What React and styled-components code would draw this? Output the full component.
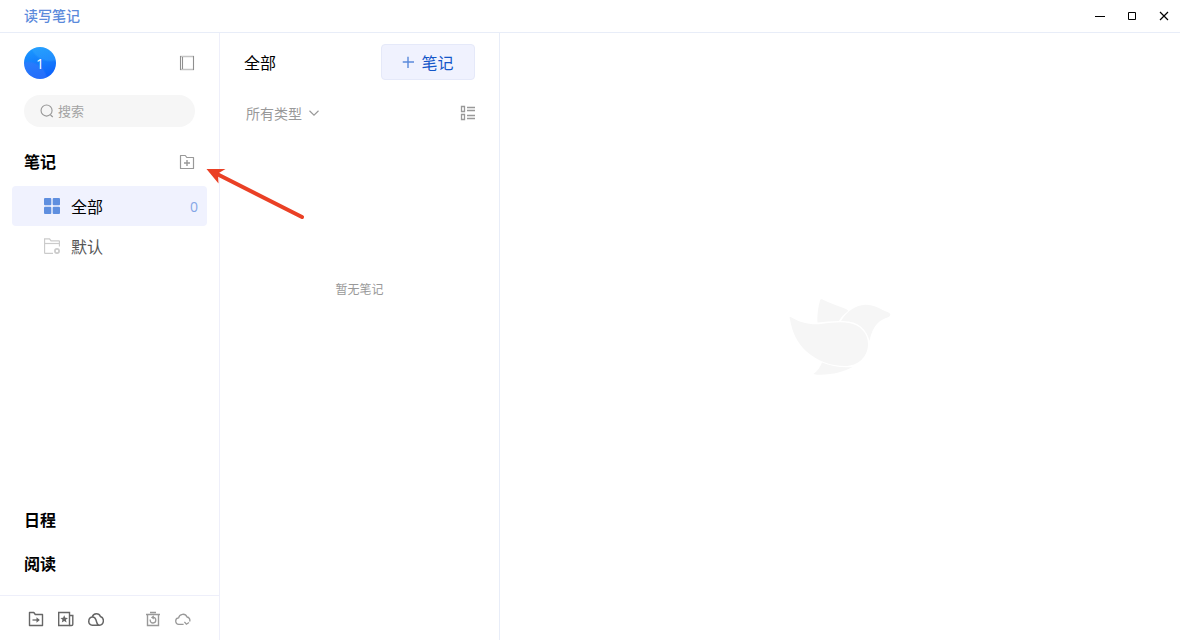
import { useState } from "react";
import styled, { createGlobalStyle } from "styled-components";

const GlobalStyle = createGlobalStyle`
  * {
    box-sizing: border-box;
  }

  body {
    margin: 0;
    background: #fff;
    font-family: "Open Sans", "Noto Sans CJK SC", sans-serif;
    color: #000;
  }

  button, input {
    font-family: inherit;
  }

  svg {
    display: block;
    flex: none;
  }
`;

const Window = styled.div`
  display: flex;
  flex-direction: column;
  height: 100vh;
  overflow: hidden;
`;

const TitleBar = styled.header`
  display: flex;
  justify-content: space-between;
  height: 33px;
  flex: none;
  padding-left: 24px;
  border-bottom: 1px solid #e8edf8;
`;

const AppName = styled.span`
  font-size: 14px;
  line-height: 32px;
  font-weight: 500;
  color: #5b8adb;
`;

const WindowControls = styled.div`
  display: flex;
`;

const WindowButton = styled.button`
  display: flex;
  align-items: center;
  justify-content: center;
  width: 32px;
  padding: 0;
  border: none;
  background: none;
  color: #000;
  cursor: pointer;

  &:hover {
    background: #f0f2fe;
  }
`;

const Body = styled.div`
  display: flex;
  flex: 1;
  min-height: 0;
`;

const Sidebar = styled.aside`
  position: relative;
  display: flex;
  flex-direction: column;
  width: 220px;
  flex: none;
  border-right: 1px solid #eeeffa;
`;

const UserRow = styled.div`
  display: flex;
  align-items: center;
  justify-content: space-between;
  height: 32px;
  margin: 14px 24px 16px;
`;

const Avatar = styled.button`
  width: 32px;
  height: 32px;
  padding: 2px 0 0;
  border: none;
  border-radius: 50%;
  font-size: 14px;
  line-height: 30px;
  color: #fff;
  background:
    radial-gradient(circle at 4px 34px, rgba(60, 120, 250, 0.5) 18px, transparent 20px),
    radial-gradient(circle at 26px -6px, rgba(60, 175, 255, 0.35) 19px, transparent 21px),
    linear-gradient(165deg, #1a9eff, #0c58fa);
`;

const IconButton = styled.button`
  display: flex;
  padding: 0;
  border: none;
  background: none;
  color: ${({ $color }) => $color || "#999"};
  cursor: pointer;
`;

const SearchBox = styled.label`
  display: flex;
  align-items: center;
  gap: 4px;
  height: 32px;
  margin: 0 24px;
  padding: 0 16px;
  border-radius: 16px;
  background: #f6f6f6;
  color: #999;
`;

const SearchInput = styled.input`
  flex: 1;
  min-width: 0;
  height: 32px;
  padding: 0;
  border: none;
  outline: none;
  background: none;
  font-size: 13px;
  color: #333;

  &::placeholder {
    color: #a3a3a3;
  }
`;

const SectionHeader = styled.div`
  display: flex;
  align-items: center;
  justify-content: space-between;
  height: 44px;
  margin: ${({ $first }) => ($first ? "13px" : "0")} 24px 0;
`;

const SectionTitle = styled.h2`
  margin: 0;
  font-size: 16px;
  line-height: 24px;
  font-weight: 700;
`;

const Folders = styled.nav`
  display: flex;
  flex-direction: column;
  flex: 1;
  margin: 2px 12px 0;
`;

const Folder = styled.button`
  display: flex;
  align-items: center;
  gap: 11px;
  height: 40px;
  padding: 0 9px 0 32px;
  border: none;
  border-radius: 4px;
  background: ${({ $active }) => ($active ? "#f0f2fe" : "none")};
  color: ${({ $active }) => ($active ? "#000" : "#555")};
  font-size: 16px;
  line-height: 24px;
  text-align: left;
  cursor: pointer;
`;

const FolderName = styled.span`
  padding-top: 2px;
`;

const Count = styled.span`
  margin-left: auto;
  padding-top: 2px;
  font-size: 14px;
  color: #85a6e6;
`;

const SidebarFooter = styled.footer`
  display: flex;
  align-items: center;
  gap: 14px;
  height: 45px;
  margin-top: 9px;
  padding: 2px 28px 0;
  border-top: 1px solid #eeeffa;
`;

const FooterEnd = styled.div`
  display: flex;
  align-items: center;
  gap: 14px;
  margin-left: auto;
`;

const NoteList = styled.section`
  display: flex;
  flex-direction: column;
  width: 280px;
  flex: none;
  border-right: 1px solid #e8edf8;
`;

const ListHeader = styled.div`
  display: flex;
  align-items: center;
  justify-content: space-between;
  margin: 11px 24px 0;
`;

const ListTitle = styled.h1`
  margin: 0;
  padding-top: 2px;
  font-size: 16px;
  line-height: 34px;
  font-weight: 400;
`;

const NewNoteButton = styled.button`
  display: flex;
  align-items: center;
  justify-content: center;
  gap: 7px;
  width: 94px;
  height: 36px;
  padding: 0;
  border: 1px solid #e5e9f9;
  border-radius: 4px;
  background: #f0f2fe;
  color: #1456c8;
  font-size: 16px;
  cursor: pointer;
`;

const FilterRow = styled.div`
  display: flex;
  align-items: center;
  justify-content: space-between;
  margin: 21px 23px 0 26px;
`;

const TypeFilter = styled.label`
  display: grid;
  align-items: center;
  color: #999;

  & > * {
    grid-area: 1 / 1;
  }

  & > svg {
    justify-self: end;
    pointer-events: none;
  }
`;

const TypeSelect = styled.select`
  appearance: none;
  width: 74px;
  height: 24px;
  padding: 0;
  border: none;
  outline: none;
  background: none;
  font-family: inherit;
  font-size: 14px;
  color: #999;
`;

const EmptyText = styled.p`
  margin: 155px 0 0;
  font-size: 12px;
  line-height: 20px;
  text-align: center;
  color: #999;
`;

const Editor = styled.main`
  display: flex;
  align-items: center;
  justify-content: center;
  flex: 1;
  min-width: 0;
  padding-top: 2px;
`;

// the pointer lies over the sidebar and the list
const Pointer = styled.svg`
  position: absolute;
  left: 204px;
  top: 131px;
  z-index: 1;
  pointer-events: none;
`;

const Icon = ({ size = 16, children, ...rest }) => (
  <svg width={size} height={size} viewBox="0 0 16 16" fill="none" stroke="currentColor" aria-hidden="true" {...rest}>
    {children}
  </svg>
);

const PanelIcon = () => (
  <Icon>
    <path d="M1 1.5h14M1 14.5h14" stroke="#c4c4c4" strokeWidth="1.5" />
    <path d="M1.5 1v14M3.5 2v12M14.5 1v14" stroke="#8f8f8f" strokeWidth="1.1" />
  </Icon>
);

const SearchIcon = () => (
  <Icon size={14}>
    <circle cx="7.5" cy="7.5" r="6.3" strokeWidth="1.3" />
    <path d="M12 12.5l2.6 2.3" strokeWidth="1.4" />
  </Icon>
);

const AddFolderIcon = () => (
  <Icon>
    <path d="M1.5 14.5v-13h4.8l1.5 2h6.7v11z" strokeWidth="1.2" strokeLinejoin="round" />
    <path d="M8 6v6M5 9h6" strokeWidth="1.4" />
  </Icon>
);

const GridIcon = () => (
  <Icon stroke="none" fill="#5f8fdf">
    <rect width="7.3" height="7.3" rx="1" />
    <rect x="8.7" width="7.3" height="7.3" rx="1" />
    <rect y="8.7" width="7.3" height="7.3" rx="1" />
    <rect x="8.7" y="8.7" width="7.3" height="7.3" rx="1" />
  </Icon>
);

const DefaultFolderIcon = () => (
  <Icon stroke="#cbcbcb">
    <path d="M9 15.3H1.3a.8.8 0 0 1-.8-.8V.8h5l1.6 2h7.6a.8.8 0 0 1 .8.8v5" strokeWidth="1.3" />
    <path d="M.5 5.5h15" strokeWidth="1.2" />
    <circle cx="13" cy="13" r="2.1" strokeWidth="1.7" />
  </Icon>
);

const MoveFolderIcon = () => (
  <Icon>
    <path d="M1.5 14.5v-13h4.3l1.5 2h7.2v11z" strokeWidth="1.4" strokeLinejoin="round" />
    <path d="M4.5 9h6" strokeWidth="1.3" />
    <path d="M8.5 6.2L11.8 9l-3.3 2.8z" fill="currentColor" stroke="none" />
  </Icon>
);

const FavoriteIcon = () => (
  <Icon>
    <path d="M.7 1.5h10.8v13H.7z" strokeWidth="1.4" />
    <path d="M11.5 4.5h3.3v8.8q0 1.2-1.2 1.2h-2.1" strokeWidth="1.4" />
    <path d="M6.2 4.3l1.1 2.5 2.7.2-2.1 1.8.7 2.7-2.4-1.4-2.4 1.4.7-2.7-2.1-1.8 2.7-.2z" fill="currentColor" stroke="none" />
  </Icon>
);

const CloudIcon = () => (
  <Icon strokeWidth="1.5">
    <path d="M4.3 5.7A4.3 4.3 0 0 1 12.4 5.500a4.500 4.500 0 0 1-.9 8.700H4.300A3.600 3.600 0 0 1 .8 10.200c0-2.500 1.700-4.300 3.800-4.300 1.900 0 2.700 1.200 3.300 2.800l.9 2.700c.5 1.600 1.300 2.800 2.700 2.800" />
  </Icon>
);

const TrashIcon = () => (
  <Icon>
    <path d="M1 3.5h14M5 1.5h6M2.5 3.5v11h11v-11" strokeWidth="1.4" />
    <path d="M5.2 8.6v.9a2.8 2.8 0 1 0 3-3.1h-.7" strokeWidth="1.3" />
    <path d="M8.8 4.3v4.2L5.9 6.4z" fill="currentColor" stroke="none" />
  </Icon>
);

const SyncIcon = () => (
  <Icon strokeWidth="1.3">
    <path d="M8.6 13.3H4.3A3.2 3.2 0 0 1 3.6 6.9 4.4 4.4 0 0 1 12 6a3.3 3.3 0 0 1 2.6 4.6" />
    <path d="M9.4 10.8l2 2.4 2.6-1.7" />
  </Icon>
);

const PlusIcon = () => (
  <Icon size={12} stroke="#5b8adb" strokeWidth="1.9">
    <path d="M8 1v15M1 8h15" />
  </Icon>
);

const ChevronIcon = () => (
  <Icon size={12}>
    <path d="M2 5l6 6 6-6" strokeWidth="1.5" />
  </Icon>
);

const ListIcon = () => (
  <Icon>
    <path d="M1.5 1.5h3v5h-3zM1.5 9.5h3v5h-3zM7 2.5h8M7 5.5h8M7 10.5h8M7 13.5h8" strokeWidth="1.3" />
  </Icon>
);

const Bird = () => (
  <svg width="102" height="78" viewBox="0 0 102 78" fill="#f6f6f6" aria-hidden="true">
    <path d="M1 20C-.2 18.5 1 17.5 2.5 18.5C12 24 21 26 32 25C44 23.5 52 22.5 60 24C71 26 79 34 79 45C79 58 69 67 56 67C42 67 28 62 17 52C8 43.5 3 33 1 20Z" />
    <path d="M28.5 23.5C28 15 29.5 7 31 1.5C31.5.2 32.5 0 34 .8C40 4 48 6.5 57 10C59.5 11.5 59.5 12 58 13C54 16 52 18.5 50 22C43 22 36 23 28.5 23.5Z" />
    <path d="M52 22C58 12 67 6 76 5.7C85 5.5 91 10 99.5 13.5C102 14.7 102 16.5 99.5 18C93 21 85 22 80.5 42C78 30 68 21 52 22Z" />
    <path d="M25 74.5C28.5 72 31 68.5 33 63.5C42 67 52 69 63.5 68C55 73 41 76.5 26.5 75.5C24.5 75.3 24 75 25 74.5Z" />
  </svg>
);

export default function App() {
  const [keyword, setKeyword] = useState("");
  const [folder, setFolder] = useState("all");

  return (
    <Window>
      <GlobalStyle />
      <TitleBar>
        <AppName>读写笔记</AppName>
        <WindowControls>
          <WindowButton aria-label="最小化">
            <Icon><path d="M3 8.5h10" /></Icon>
          </WindowButton>
          <WindowButton aria-label="最大化">
            <Icon><path d="M4.5 4.5h7v7h-7z" /></Icon>
          </WindowButton>
          <WindowButton aria-label="关闭">
            <Icon><path d="M4 4l8 8M12 4l-8 8" strokeWidth="1.2" /></Icon>
          </WindowButton>
        </WindowControls>
      </TitleBar>

      <Body>
        <Sidebar>
          <UserRow>
            <Avatar>1</Avatar>
            <IconButton aria-label="收起侧栏"><PanelIcon /></IconButton>
          </UserRow>

          <SearchBox>
            <SearchIcon />
            <SearchInput
              type="text"
              aria-label="搜索"
              placeholder="搜索"
              value={keyword}
              onChange={(e) => setKeyword(e.target.value)}
            />
          </SearchBox>

          <SectionHeader $first>
            <SectionTitle>笔记</SectionTitle>
            <IconButton aria-label="新建文件夹"><AddFolderIcon /></IconButton>
          </SectionHeader>

          <Folders>
            <Folder $active={folder === "all"} onClick={() => setFolder("all")}>
              <GridIcon />
              <FolderName>全部</FolderName>
              <Count>0</Count>
            </Folder>
            <Folder $active={folder === "default"} onClick={() => setFolder("default")}>
              <DefaultFolderIcon />
              <FolderName>默认</FolderName>
            </Folder>
          </Folders>

          <SectionHeader>
            <SectionTitle>日程</SectionTitle>
          </SectionHeader>
          <SectionHeader>
            <SectionTitle>阅读</SectionTitle>
          </SectionHeader>

          <SidebarFooter>
            <IconButton $color="#666" aria-label="导入"><MoveFolderIcon /></IconButton>
            <IconButton $color="#666" aria-label="收藏"><FavoriteIcon /></IconButton>
            <IconButton $color="#666" aria-label="云盘"><CloudIcon /></IconButton>
            <FooterEnd>
              <IconButton aria-label="回收站"><TrashIcon /></IconButton>
              <IconButton aria-label="同步"><SyncIcon /></IconButton>
            </FooterEnd>
          </SidebarFooter>

          <Pointer width="102" height="58" viewBox="0 0 102 58" aria-hidden="true">
            <path d="M13 10L98 53" stroke="#ea4025" strokeWidth="4" strokeLinecap="round" />
            <path d="M2.5 5h19l-7.5 4.5.5 10z" fill="#ea4025" />
          </Pointer>
        </Sidebar>

        <NoteList>
          <ListHeader>
            <ListTitle>全部</ListTitle>
            <NewNoteButton>
              <PlusIcon />
              笔记
            </NewNoteButton>
          </ListHeader>
          <FilterRow>
            <TypeFilter>
              <TypeSelect aria-label="类型">
                <option>所有类型</option>
              </TypeSelect>
              <ChevronIcon />
            </TypeFilter>
            <IconButton aria-label="列表视图"><ListIcon /></IconButton>
          </FilterRow>
          <EmptyText>暂无笔记</EmptyText>
        </NoteList>

        <Editor>
          <Bird />
        </Editor>
      </Body>
    </Window>
  );
}
